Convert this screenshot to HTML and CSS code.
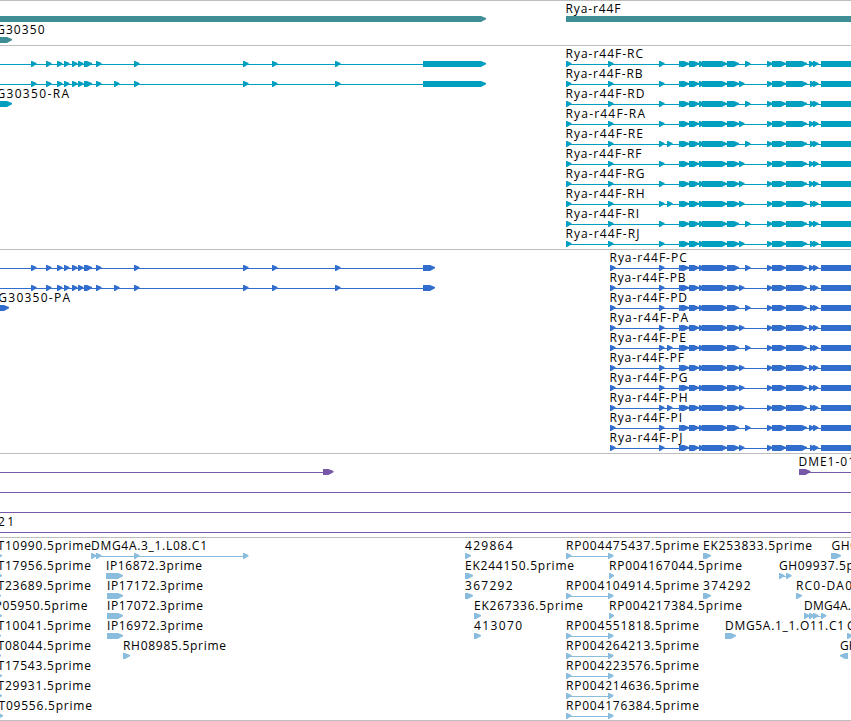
FILE: index.html
```
<!DOCTYPE html>
<html lang="en">
<head>
    <meta charset="UTF-8">
    <title>Rya-r44F</title>
    <link rel="stylesheet" href="styles.css">
</head>
<body>
    <main class="browser">
        <svg class="track track-gene" id="genes"></svg>
        <svg class="track track-transcript" id="transcripts"></svg>
        <svg class="track track-protein" id="proteins"></svg>
        <svg class="track track-clone" id="clones"></svg>
        <svg class="track track-est" id="ests"></svg>
    </main>
    <script src="script.js"></script>
</body>
</html>
```
FILE: styles.css
```
body {
    margin: 0;
    background-color: #fff;
}
.browser {
    display: flex;
    flex-direction: column;
    width: 851px;
    height: 721px;
    box-sizing: border-box;
    overflow: hidden;
    border-bottom: 1px solid #bebebe;
}
.track {
    display: block;
    flex: none;
    width: 851px;
    box-sizing: border-box;
    border-top: 1px solid #bebebe;
    overflow: hidden;
}
.track text {
    font-family: "Open Sans", "Noto Sans", sans-serif;
    font-size: 12px;
    fill: #000;
}
.track-gene {
    height: 45px;
    fill: #408e95;
}
.track-transcript {
    height: 204px;
    fill: #009ebf;
}
.track-protein {
    height: 204px;
    fill: #316dcd;
}
.track-clone {
    height: 84px;
    fill: #7759a8;
}
.track-est {
    height: 183px;
    fill: #8abddd;
}
```
FILE: script.js
```
const NS = 'http://www.w3.org/2000/svg';

function add(track, name, attrs, text) {
    const el = document.createElementNS(NS, name);
    for (const key in attrs) el.setAttribute(key, attrs[key]);
    if (text) el.textContent = text;
    document.getElementById(track).appendChild(el);
}

// Thin intron line
function line(track, y, from, to) {
    add(track, 'rect', { x: from, y: y + 18, width: to - from, height: 1 });
}

// Exon block, pointed in the direction of the strand
function exon(track, y, from, to) {
    const top = y + 15;
    const dir = to > from ? 1 : -1;
    const neck = to - dir * Math.min(5, Math.abs(to - from) - 1);
    add(track, 'polygon', {
        points: `${from},${top} ${neck},${top} ${to},${top + 2} ${to},${top + 3.2} ${neck},${top + 6} ${from},${top + 6}`
    });
}

// A number is a short exon, a pair is a long one
function exons(track, y, list) {
    list.forEach(e => Array.isArray(e) ? exon(track, y, e[0], e[1]) : exon(track, y, e, e + 5.5));
}

function label(track, y, from, to, text) {
    add(track, 'text', { x: from - 0.5, y: y + 12, textLength: to - from + 0.5 }, text);
}

// Genes
exons('genes', 0, [[-10, 486], [566, 870]]);
exons('genes', 21, [[-10, 12]]);
label('genes', 0, 566, 620.5, 'Rya-r44F');
label('genes', 21, -12, 44.5, 'CG30350');

// Transcripts and proteins share the same exons
const upstream = [31, 46, 57, 64, 72, 78, [84, 92], 96, 134, 243, 272, 335];

function upstreamGene(track, end) {
    [0, 20].forEach(y => {
        line(track, y, 0, 423);
        exons(track, y, upstream);
        exons(track, y, [[423, end]]);
    });
    exons(track, 20, [114]);
}

upstreamGene('transcripts', 486);
exons('transcripts', 40, [[-10, 12]]);
label('transcripts', 40, -12, 69, 'CG30350-RA');

upstreamGene('proteins', 435);
exons('proteins', 40, [[-10, 9]]);
label('proteins', 40, -10, 70, 'CG30350-PA');

// isoform, label ends, exons that differ
const isoforms = [
    ['C', 643, 686.7, [745, 809]],
    ['B', 642.5, 685.5, [739, 810]],
    ['D', 644.5, 687, [745, 810]],
    ['A', 645, 688, [739, 809]],
    ['E', 643, 686, [667, 745, 810]],
    ['F', 641.5, 684, [739, 809]],
    ['G', 644.5, 687.5, [739, 809]],
    ['H', 644.5, 687.5, [667, 739, 810]],
    ['I', 639, 682, [745, 809]],
    ['J', 639.5, 682.5, [739, 810]]
];
const common = [659, 679, [681, 689], [689, 699], 699, [702, 727], [727, 739], 767, [772, 786], [786, 807], 813, [821, 870]];

isoforms.forEach(([name, rnaEnd, pepEnd, own], i) => {
    const y = i * 20;
    line('transcripts', y, 566, 821);
    exons('transcripts', y, [566, 608, ...common, ...own]);
    label('transcripts', y, 566, rnaEnd, 'Rya-r44F-R' + name);

    line('proteins', y, 610, 821);
    exons('proteins', y, [610, ...common, ...own]);
    label('proteins', y, 610, pepEnd, 'Rya-r44F-P' + name);
});

// Clones
line('clones', 0, 0, 323);
exons('clones', 0, [[323, 333.5], [799, 810.5]]);
line('clones', 0, 799, 851);
[20, 40, 60].forEach(y => line('clones', y, 0, 851));
label('clones', 0, 799, 855, 'DME1-01');
label('clones', 60, -1.5, 14, '21');

// ESTs: label, label start, label end, exons
const ests = [
    [
        ['T10990.5prime', -2, 91, [[-8, 2]]],
        ['DMG4A.3_1.L08.C1', 91.5, 207, [91, 96, 134, 243]],
        ['429864', 465.5, 512.5, [[465, 471]]],
        ['RP004475437.5prime', 566.5, 699, [566, 608]],
        ['EK253833.5prime', 703.5, 812, [[703, 711]]],
        ['GH0', 832, 857, [[831, 841]]]
    ],
    [
        ['T17956.5prime', -2, 91, [[-8, 2]]],
        ['IP16872.3prime', 106.5, 202, [[106, 123]]],
        ['EK244150.5prime', 465.5, 574, [[465, 473]]],
        ['RP004167044.5prime', 609.5, 742, [[609, 614]]],
        ['GH09937.5prime', 779.5, 882, [779, 786]]
    ],
    [
        ['T23689.5prime', -2, 91, [[-8, 1]]],
        ['IP17172.3prime', 107.5, 203, [[107, 123]]],
        ['367292', 465.5, 512.5, [[465, 473]]],
        ['RP004104914.5prime', 566.5, 699, [566, 608]],
        ['374292', 703.5, 750.5, [[703, 711]]],
        ['RC0-DA0', 796.5, 852, [[796, 802]]]
    ],
    [
        ['P05950.5prime', -5, 87.5, [[-8, 2]]],
        ['IP17072.3prime', 107.5, 203, [[107, 123]]],
        ['EK267336.5prime', 474.5, 583, [[474, 481]]],
        ['RP004217384.5prime', 609.5, 742, [[609, 614]]],
        ['DMG4A.', 804.5, 851, [804, 809, 813, 821]]
    ],
    [
        ['T10041.5prime', -2, 91, [[-8, 1]]],
        ['IP16972.3prime', 107.5, 203, [[107, 123]]],
        ['413070', 474.5, 522, [[474, 481]]],
        ['RP004551818.5prime', 566.5, 699, [566, 608]],
        ['DMG5A.1_1.O11.C1', 725.5, 844, [[725, 736]]],
        ['G', 847.5, 856, [847]]
    ],
    [
        ['T08044.5prime', -2, 91, [[-8, 1]]],
        ['RH08985.5prime', 123.5, 226, [[123, 130]]],
        ['RP004264213.5prime', 566.5, 699, [566, 608]],
        ['GH', 840.5, 857.5, [[848, 840]]]
    ],
    [
        ['T17543.5prime', -2, 91, [[-8, 2]]],
        ['RP004223576.5prime', 566.5, 699, [566, 608]]
    ],
    [
        ['T29931.5prime', -2, 91, [[-8, 2]]],
        ['RP004214636.5prime', 566.5, 699, [566, 608]]
    ],
    [
        ['T09556.5prime', -1, 92, [[-8, 3]]],
        ['RP004176384.5prime', 566.5, 699, [566, 608]]
    ]
];

ests.forEach((row, i) => {
    const y = i * 20;
    row.forEach(([text, from, to, list]) => {
        if (list.length > 1) line('ests', y, list[0], list[list.length - 1]);
        exons('ests', y, list);
        label('ests', y, from, to, text);
    });
});
```
